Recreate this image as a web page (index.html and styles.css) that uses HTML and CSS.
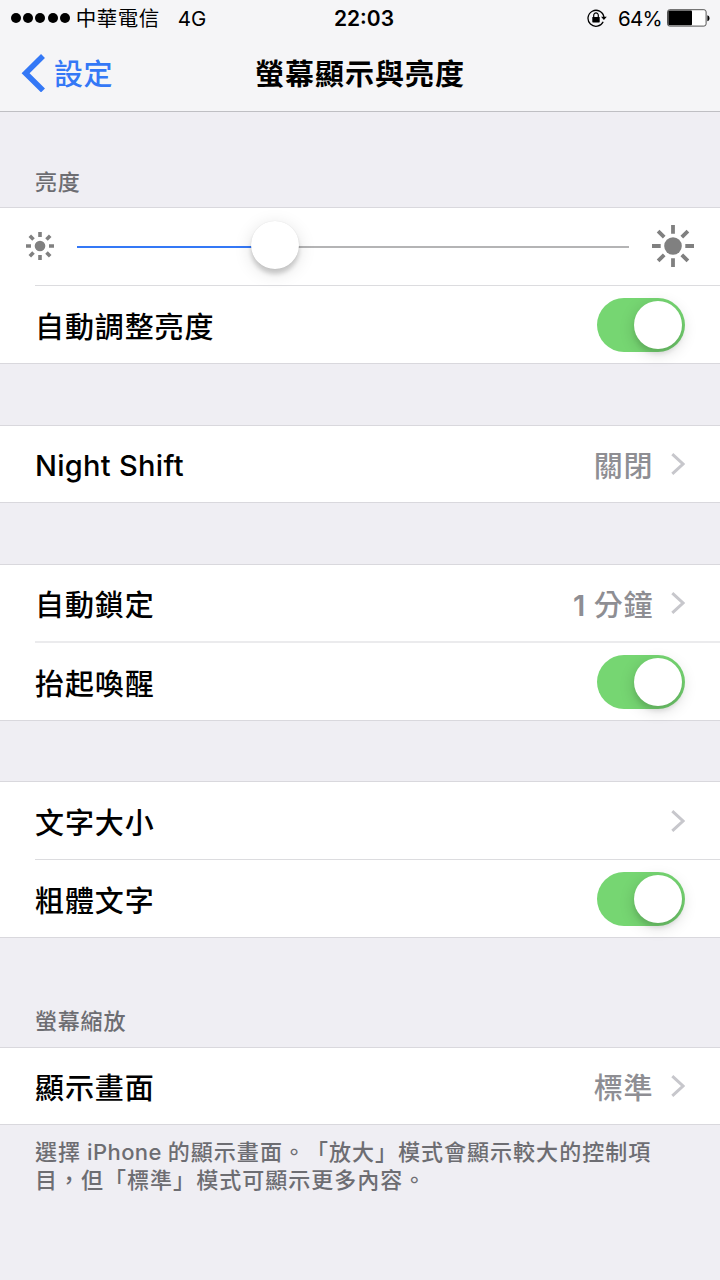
FILE: index.html
```html
<!DOCTYPE html>
<html lang="zh-Hant">
<head>
<meta charset="utf-8">
<title>螢幕顯示與亮度</title>
<link rel="stylesheet" href="styles.css">
</head>
<body>
<header class="top">
  <div class="status">
    <div class="carrier">
      <span class="dots"><i></i><i></i><i></i><i></i><i></i></span>
      <span class="operator">中華電信</span>
      <span class="network">4G</span>
    </div>
    <div class="clock">22:03</div>
    <div class="power">
      <svg class="lock" width="20" height="18" viewBox="0 0 20 18">
        <path d="M16.2 12.8A8 8 0 1 1 16.9 8" fill="none" stroke="#000" stroke-width="1.3"/>
        <path d="M14 7.8h5.8l-2.9 3.2z"/>
        <rect x="5.3" y="7.9" width="7.4" height="5.5" rx=".6"/>
        <path d="M6.7 8.2V6.2a2.3 2.3 0 0 1 4.6 0v2" fill="none" stroke="#000" stroke-width="1.2"/>
      </svg>
      <span class="percent">64%</span>
      <svg class="battery" width="43" height="18" viewBox="0 0 43 18">
        <rect x=".5" y=".7" width="38.6" height="16.4" rx="2.2" fill="#fff" stroke="#555" stroke-width="1"/>
        <rect x="1.3" y="1.5" width="23.7" height="14.8" rx="1"/>
        <path d="M40.4 6.2c2.8.6 2.8 5.4 0 6z"/>
      </svg>
    </div>
  </div>
  <nav class="nav">
    <a class="back">
      <svg width="24" height="38" viewBox="0 0 24 38"><path d="M22 2 4.6 19.2 22 36.4" fill="none" stroke="#3478f6" stroke-width="5.6"/></svg>
      <span>設定</span>
    </a>
    <h1>螢幕顯示與亮度</h1>
  </nav>
</header>

<main>
  <h2 class="caption">亮度</h2>
  <section class="group">
    <div class="row slider-row">
      <svg class="sun" width="28" height="28" viewBox="-14 -14 28 28">
        <circle r="5.3" fill="#808080"/>
        <path d="M0-14V-9M0 14V9M-14 0H-9M14 0H9M-10.2-10.2-6.5-6.5M10.2 10.2 6.5 6.5M-10.2 10.2-6.5 6.5M10.2-10.2 6.5-6.5" stroke="#808080" stroke-width="3.6"/>
      </svg>
      <div class="slider"><div class="fill"></div><div class="knob"></div></div>
      <svg class="sun" width="42" height="42" viewBox="-21 -21 42 42">
        <circle r="8.8" fill="#808080"/>
        <path d="M0-21V-12.3M0 21V12.3M-21 0H-12.3M21 0H12.3M-14.9-14.9-8.8-8.8M14.9 14.9 8.8 8.8M-14.9 14.9-8.8 8.8M14.9-14.9 8.8-8.8" stroke="#808080" stroke-width="3.8"/>
      </svg>
    </div>
    <div class="row split"><span class="label">自動調整亮度</span><span class="switch"></span></div>
  </section>

  <section class="group">
    <div class="row short"><span class="label latin">Night Shift</span><span class="value">關閉</span><svg class="chevron" viewBox="0 0 14 22"><path d="m1.3 1.2 10.7 9.8-10.7 9.8"/></svg></div>
  </section>

  <section class="group">
    <div class="row short"><span class="label">自動鎖定</span><span class="value"><span class="digit">1</span>分鐘</span><svg class="chevron" viewBox="0 0 14 22"><path d="m1.3 1.2 10.7 9.8-10.7 9.8"/></svg></div>
    <div class="row split soft"><span class="label">抬起喚醒</span><span class="switch"></span></div>
  </section>

  <section class="group fourth">
    <div class="row"><span class="label">文字大小</span><svg class="chevron" viewBox="0 0 14 22"><path d="m1.3 1.2 10.7 9.8-10.7 9.8"/></svg></div>
    <div class="row split"><span class="label">粗體文字</span><span class="switch"></span></div>
  </section>

  <h2 class="caption second">螢幕縮放</h2>
  <section class="group">
    <div class="row short"><span class="label">顯示畫面</span><span class="value">標準</span><svg class="chevron" viewBox="0 0 14 22"><path d="m1.3 1.2 10.7 9.8-10.7 9.8"/></svg></div>
  </section>
  <p class="note">選擇<span class="phone">iPhone</span>的顯示畫面。「放大」模式會顯示較大的控制項<br>目，但「標準」模式可顯示更多內容。</p>
</main>
</body>
</html>
```

FILE: styles.css
```css
* { box-sizing: border-box; }
body {
  margin: 0;
  width: 720px;
  height: 1280px;
  overflow: hidden;
  background: #efeef3;
  color: #000;
  font-family: "Noto Sans CJK TC", "Liberation Sans", sans-serif;
}
h1, h2, p { margin: 0; font-weight: 500; }
svg { display: block; flex: none; }

.top {
  height: 112px;
  background: #f5f5f7;
  border-bottom: 1px solid #bfbfc3;
}
.status {
  display: grid;
  grid-template-columns: 1fr auto 1fr;
  align-items: center;
  height: 36px;
  padding: 0 10px 0 11px;
  line-height: 32px;
}
.carrier, .power { display: flex; align-items: center; height: 36px; }
.dots { display: flex; gap: 2.2px; }
.dots i { width: 10px; height: 10px; border-radius: 50%; background: #000; }
.operator { margin-left: 6px; padding-bottom: 2px; font-size: 20.5px; letter-spacing: .5px; }
.network, .clock, .percent { font-family: Inter, sans-serif; }
.network { margin-left: 18px; padding-top: 1px; font-size: 20.5px; }
.clock { padding: 2px 0 0 7px; font-size: 21px; font-weight: 600; letter-spacing: 0; }
.power { justify-content: flex-end; }
.percent { margin-left: 10px; padding-top: 1px; font-size: 20.5px; letter-spacing: -.7px; }
.lock { margin-right: 1px; }
.battery { margin-left: 5px; }

.nav {
  display: grid;
  grid-template-columns: 1fr auto 1fr;
  align-items: center;
  height: 75px;
  padding: 0 21px 2px;
}
.back { display: flex; align-items: center; color: #3478f6; font-size: 29px; line-height: 40px; font-weight: 500; }
.back span { margin-left: 9px; padding-bottom: 2px; letter-spacing: .5px; }
.nav h1 { padding-bottom: 1px; font-size: 29px; font-weight: 700; letter-spacing: 1px; line-height: 40px; }

.caption {
  height: 95px;
  padding: 52px 35px 0;
  font-size: 22px;
  line-height: 32px;
  letter-spacing: .8px;
  color: #6d6d72;
}
.caption.second { height: 109px; padding-top: 65px; }
.group {
  background: #fff;
  border-top: 1px solid #d9d8dd;
  border-bottom: 1px solid #d9d8dd;
}
.group + .group { margin-top: 61px; }
.group + .group.fourth { margin-top: 60px; }
.row {
  display: flex;
  align-items: center;
  height: 77px;
  padding: 0 35px;
}
.row.short { height: 76px; }
.row.split {
  height: 78px;
  padding-top: 2px;
  background: linear-gradient(#dcdcdf, #dcdcdf) 35px 0 / 100% 1px no-repeat;
}
.row.soft { height: 79px; background: linear-gradient(#ebebed, #ebebed) 35px 0 / 100% 2px no-repeat; }
.label { flex: 1; font-size: 29px; font-weight: 500; letter-spacing: .9px; }
.label.latin { padding-top: 2px; font-family: Inter, sans-serif; font-size: 29px; letter-spacing: .3px; }
.value { color: #8e8e93; font-size: 29px; font-weight: 500; letter-spacing: .6px; }
.digit { margin-right: 8px; font-family: Inter, sans-serif; font-weight: 600; }
.chevron { width: 14px; height: 22px; margin-left: 18px; }
.chevron path { fill: none; stroke: #c7c7cc; stroke-width: 3; }

.slider-row { padding: 0 26px; }
.sun { margin-bottom: 2px; }
.slider {
  position: relative;
  flex: 1;
  height: 2px;
  margin: 1px 23px 0;
  background: #b4b4b5;
}
.fill { width: 190px; height: 2px; background: #3478f6; }
.knob {
  position: absolute;
  left: 174px;
  top: -25px;
  width: 48px;
  height: 48px;
  border-radius: 50%;
  background: #fff;
  box-shadow: 0 5px 4px rgba(0,0,0,.16), 0 4px 18px rgba(0,0,0,.13), 0 0 1px rgba(0,0,0,.12);
}
.switch {
  display: flex;
  justify-content: flex-end;
  width: 88.5px;
  height: 54px;
  padding: 3px;
  border-radius: 27px;
  background: #76d672;
}
.switch::after {
  content: "";
  width: 48px;
  height: 48px;
  border-radius: 50%;
  background: #fff;
  box-shadow: 0 5px 4px rgba(0,0,0,.08), 0 4px 15px rgba(0,0,0,.17);
}
.note {
  padding: 11px 35px 0;
  font-size: 22px;
  line-height: 28px;
  letter-spacing: 1.02px;
  white-space: nowrap;
  text-spacing-trim: space-all;
  color: #6d6d72;
}
.phone { margin: 0 6px; font-family: Inter, sans-serif; line-height: 1; letter-spacing: .4px; }
```
